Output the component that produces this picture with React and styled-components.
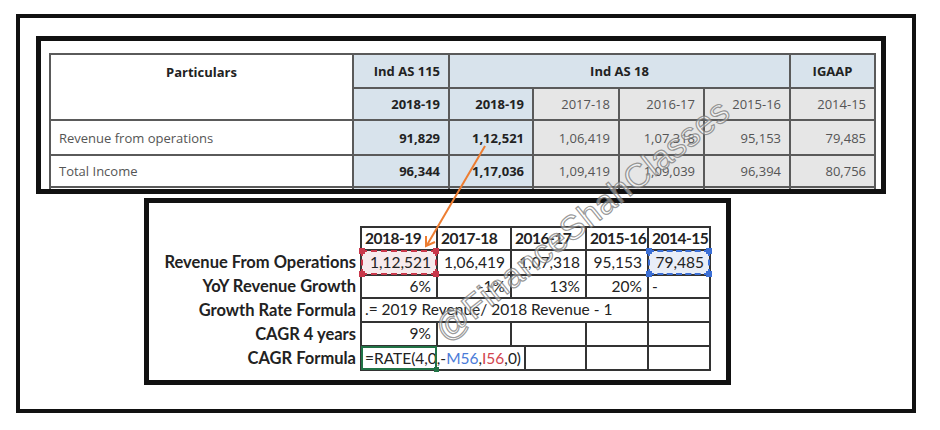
import React from 'react'
import styled, { createGlobalStyle, css } from 'styled-components'

const GlobalStyle = createGlobalStyle`
  html, body {
    margin: 0;
    padding: 0;
    background: #fff;
    overflow: hidden;
  }
`

const Page = styled.div`
  position: relative;
  width: 940px;
  height: 430px;
  padding: 14px 0 0 16px;
  box-sizing: border-box;
`

const OuterFrame = styled.div`
  width: 900px;
  height: 399px;
  border: 4px solid #111;
  box-sizing: border-box;
  padding: 18px 0 0 16px;
  display: flex;
  flex-direction: column;
`

const TopBox = styled.div`
  width: 850px;
  height: 158px;
  border: 5px solid #111;
  box-sizing: border-box;
  padding: 12px 0 0 8px;
  overflow: hidden;
`

const ReportTable = styled.table`
  width: 825px;
  table-layout: fixed;
  border-collapse: collapse;
  font-family: "Open Sans", "Liberation Sans", sans-serif;
  font-size: 13px;
  color: #555;
`

const RCell = styled.td`
  border: 2px solid #5a5a5a;
  height: ${p => p.$h || 32}px;
  padding: 0 8px;
  box-sizing: border-box;
  text-align: ${p => p.$align || 'right'};
  vertical-align: ${p => p.$valign || 'middle'};
  white-space: nowrap;
  background: ${p => (p.$tone === 'blue' ? '#d8e3ec' : p.$tone === 'grey' ? '#e6e6e6' : '#fff')};
  ${p => p.$bold && css`
    font-weight: 700;
    color: #222;
  `}
`

const ParticularsLabel = styled.div`
  height: 34px;
  line-height: 34px;
  font-weight: 700;
  color: #222;
`

const BottomBox = styled.div`
  margin: 4px 0 0 108px;
  width: 587px;
  height: 187px;
  border: 5px solid #111;
  box-sizing: border-box;
  padding-top: 23px;
`

const SheetTable = styled.table`
  width: 561px;
  table-layout: fixed;
  border-collapse: collapse;
  font-family: Lato, "Liberation Sans", sans-serif;
  font-size: 15.5px;
  color: #222;
  line-height: 1;
`

const Label = styled.td`
  border: none;
  text-align: right;
  padding: 0 4px 0 0;
  font-size: 16.5px;
  font-weight: 700;
  white-space: nowrap;
`

const Cell = styled.td`
  position: relative;
  border: 2px solid #333;
  padding: ${p => (p.$align === 'left' ? '0 0 0 3px' : '0 5px 0 0')};
  text-align: ${p => p.$align || 'right'};
  white-space: nowrap;
  overflow: visible;
  background: ${p => p.$fill || 'transparent'};
  ${p => p.$bold && css`
    font-weight: 700;
    letter-spacing: -0.5px;
  `}
`

const Row = styled.tr`
  height: ${p => p.$h}px;
`

const Selection = styled.div`
  position: absolute;
  inset: -1px;
  border: 2px dashed ${p => p.$color};
  pointer-events: none;
`

const Handle = styled.span`
  position: absolute;
  width: 6px;
  height: 6px;
  background: ${p => p.$color};
  ${p => (p.$top ? 'top: -4px;' : 'bottom: -4px;')}
  ${p => (p.$left ? 'left: -4px;' : 'right: -4px;')}
`

const ActiveCell = styled.div`
  position: absolute;
  left: -1px;
  top: -1px;
  width: 76px;
  bottom: -1px;
  border: 2px solid #217346;
  box-sizing: border-box;
  pointer-events: none;
`

const FillHandle = styled.span`
  position: absolute;
  right: -4px;
  bottom: -4px;
  width: 5px;
  height: 5px;
  background: #217346;
`

const EditBox = styled.span`
  display: inline-block;
  padding-right: 3px;
  border-right: 2px solid #333;
  line-height: 22px;
`

const Ref = styled.span`
  color: ${p => p.$color};
`

const Watermark = styled.div`
  position: absolute;
  left: 582px;
  top: 220px;
  transform: translate(-50%, -50%) rotate(-38.5deg);
  font-family: "Liberation Sans", sans-serif;
  font-size: 34px;
  letter-spacing: 0.5px;
  color: rgba(255, 255, 255, 0.45);
  -webkit-text-stroke: 1.2px rgba(110, 110, 110, 0.7);
  white-space: nowrap;
  pointer-events: none;
`

const Overlay = styled.svg`
  position: absolute;
  left: 0;
  top: 0;
  pointer-events: none;
`

function Marked({ color, fill, children }) {
  return (
    <Cell $fill={fill}>
      {children}
      <Selection $color={color}>
        <Handle $color={color} $top $left />
        <Handle $color={color} $top />
        <Handle $color={color} $left />
        <Handle $color={color} />
      </Selection>
    </Cell>
  )
}

export default function App() {
  return (
    <Page>
      <GlobalStyle />
      <OuterFrame>
        <TopBox>
          <ReportTable>
            <colgroup>
              <col style={{ width: 303 }} />
              <col style={{ width: 96 }} />
              <col style={{ width: 84 }} />
              <col style={{ width: 86 }} />
              <col style={{ width: 85 }} />
              <col style={{ width: 86 }} />
              <col style={{ width: 85 }} />
            </colgroup>
            <tbody>
              <tr>
                <RCell rowSpan={2} $align="center" $valign="top" $h={34}>
                  <ParticularsLabel>Particulars</ParticularsLabel>
                </RCell>
                <RCell $tone="blue" $bold $h={34}>Ind AS 115</RCell>
                <RCell colSpan={4} $tone="blue" $bold $align="center" $h={34}>Ind AS 18</RCell>
                <RCell $tone="blue" $bold $align="center" $h={34}>IGAAP</RCell>
              </tr>
              <tr>
                <RCell $tone="blue" $bold>2018-19</RCell>
                <RCell $tone="blue" $bold>2018-19</RCell>
                <RCell $tone="grey">2017-18</RCell>
                <RCell $tone="grey">2016-17</RCell>
                <RCell $tone="grey">2015-16</RCell>
                <RCell $tone="grey">2014-15</RCell>
              </tr>
              <tr>
                <RCell $align="left" $h={35}>Revenue from operations</RCell>
                <RCell $tone="blue" $bold>91,829</RCell>
                <RCell $tone="blue" $bold>1,12,521</RCell>
                <RCell $tone="grey">1,06,419</RCell>
                <RCell $tone="grey">1,07,318</RCell>
                <RCell $tone="grey">95,153</RCell>
                <RCell $tone="grey">79,485</RCell>
              </tr>
              <tr>
                <RCell $align="left">Total Income</RCell>
                <RCell $tone="blue" $bold>96,344</RCell>
                <RCell $tone="blue" $bold>1,17,036</RCell>
                <RCell $tone="grey">1,09,419</RCell>
                <RCell $tone="grey">1,09,039</RCell>
                <RCell $tone="grey">96,394</RCell>
                <RCell $tone="grey">80,756</RCell>
              </tr>
              <tr>
                <RCell />
                <RCell $tone="blue" />
                <RCell $tone="blue" />
                <RCell $tone="grey" />
                <RCell $tone="grey" />
                <RCell $tone="grey" />
                <RCell $tone="grey" />
              </tr>
            </tbody>
          </ReportTable>
        </TopBox>

        <BottomBox>
          <SheetTable>
            <colgroup>
              <col style={{ width: 212 }} />
              <col style={{ width: 76 }} />
              <col style={{ width: 74 }} />
              <col style={{ width: 75 }} />
              <col style={{ width: 62 }} />
              <col style={{ width: 62 }} />
            </colgroup>
            <tbody>
              <Row $h={23}>
                <Label />
                <Cell $align="left" $bold>2018-19</Cell>
                <Cell $align="left" $bold>2017-18</Cell>
                <Cell $align="left" $bold>2016-17</Cell>
                <Cell $align="left" $bold>2015-16</Cell>
                <Cell $align="left" $bold>2014-15</Cell>
              </Row>
              <Row $h={25}>
                <Label>Revenue From Operations</Label>
                <Marked color="#c8374a" fill="#f7eaec">1,12,521</Marked>
                <Cell>1,06,419</Cell>
                <Cell>1,07,318</Cell>
                <Cell>95,153</Cell>
                <Marked color="#3b6fd6" fill="#e9eef8">79,485</Marked>
              </Row>
              <Row $h={23}>
                <Label>YoY Revenue Growth</Label>
                <Cell>6%</Cell>
                <Cell>-1%</Cell>
                <Cell>13%</Cell>
                <Cell>20%</Cell>
                <Cell $align="left">-</Cell>
              </Row>
              <Row $h={24}>
                <Label>Growth Rate Formula</Label>
                <Cell colSpan={4} $align="left">.= 2019 Revenue/ 2018 Revenue - 1</Cell>
                <Cell />
              </Row>
              <Row $h={24}>
                <Label>CAGR 4 years</Label>
                <Cell>9%</Cell>
                <Cell />
                <Cell />
                <Cell />
                <Cell />
              </Row>
              <Row $h={24}>
                <Label>CAGR Formula</Label>
                <Cell colSpan={3} $align="left">
                  <EditBox>
                    =RATE(4,0,-<Ref $color="#4a7bd8">M56</Ref>,<Ref $color="#d2454f">I56</Ref>,0)
                  </EditBox>
                  <ActiveCell>
                    <FillHandle />
                  </ActiveCell>
                </Cell>
                <Cell />
                <Cell />
              </Row>
            </tbody>
          </SheetTable>
        </BottomBox>
      </OuterFrame>

      <Watermark>@FinanceShahClasses</Watermark>

      <Overlay width="940" height="430">
        <line x1="485" y1="146" x2="427" y2="245" stroke="#ed7d31" strokeWidth="2" />
        <polyline points="426,236 426,246 435,242" fill="none" stroke="#ed7d31" strokeWidth="2" />
      </Overlay>
    </Page>
  )
}
